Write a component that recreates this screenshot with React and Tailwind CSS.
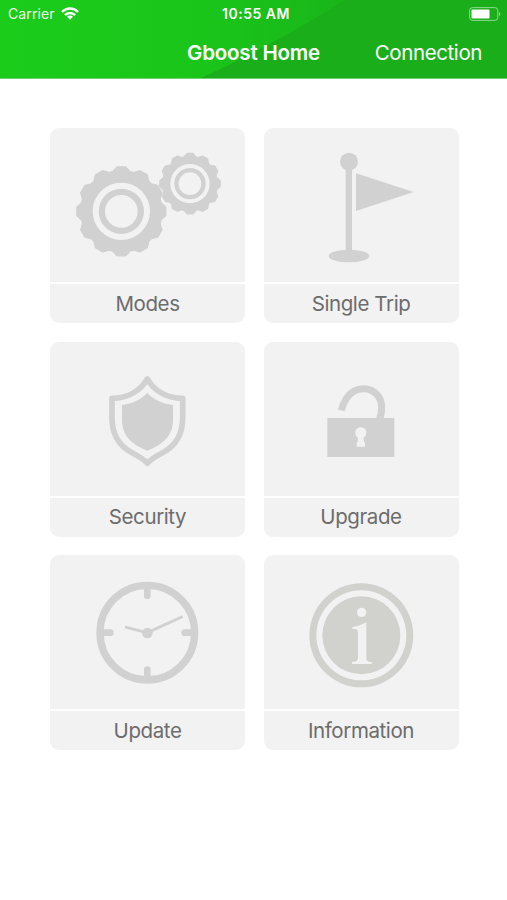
import React from "react";

const GREY = "#d1d1d1";
const CARD = "#f2f2f2";

// Outline of a cog: flat-topped teeth with shallow valleys between them
const gearPoints = (cx, cy, outer, inner, teeth) => {
    const step = (Math.PI * 2) / teeth;
    const points = [];
    for (let i = 0; i < teeth; i++) {
        const mid = i * step - Math.PI / 2;
        [[-0.41, inner], [-0.18, outer], [0.18, outer], [0.41, inner]].forEach(([offset, r]) => {
            const a = mid + offset * step;
            points.push(`${(cx + r * Math.cos(a)).toFixed(1)},${(cy + r * Math.sin(a)).toFixed(1)}`);
        });
    }
    return points.join(" ");
};

const Gear = ({ cx, cy, outer, inner, teeth, rings }) => (
    <g>
        <polygon
            points={gearPoints(cx, cy, outer - 2, inner - 2, teeth)}
            fill={GREY}
            stroke={GREY}
            strokeWidth="4"
            strokeLinejoin="round"
        />
        <circle cx={cx} cy={cy} r={rings[0]} fill={CARD} />
        <circle cx={cx} cy={cy} r={rings[1]} fill={GREY} />
        <circle cx={cx} cy={cy} r={rings[2]} fill={CARD} />
    </g>
);

const GearsIcon = () => (
    <svg viewBox="15 24 585 462" className="w-full h-full">
        <Gear cx={229} cy={274} outer={136} inner={124} teeth={12} rings={[86, 68, 49]} />
        <Gear cx={435} cy={191} outer={93} inner={84} teeth={12} rings={[59, 47, 34]} />
    </svg>
);

const FlagIcon = () => (
    <svg viewBox="18 24 585 462" className="w-full h-full" fill={GREY}>
        <circle cx="273" cy="125" r="27" />
        <rect x="263" y="140" width="19" height="260" />
        <ellipse cx="273" cy="408" rx="61" ry="19" />
        <path d="M294 160 L467 216 L294 273 Z" />
    </svg>
);

const ShieldIcon = () => (
    <svg viewBox="15 18 585 462" className="w-full h-full">
        <path
            d="M307 129 C326 161 361 187 413 187 V246 C413 301 389 331 353 350 C330 362 315 371 307 382 C299 371 284 362 261 350 C225 331 201 301 201 246 V187 C253 187 288 161 307 129 Z"
            fill="none"
            stroke={GREY}
            strokeWidth="17"
            strokeLinejoin="round"
        />
        <path
            d="M307 171 C325 190 350 203 384 207 V251 C384 300 352 326 307 344 C262 326 231 300 231 251 V207 C264 203 289 190 307 171 Z"
            fill={GREY}
        />
    </svg>
);

const UnlockIcon = () => (
    <svg viewBox="18 18 585 462" className="w-full h-full">
        <path
            d="M250 223 C253 211 258 199 265 188 C278 167 297 158 317 158 C352 158 371 187 371 214 C371 230 369 240 364 250"
            fill="none"
            stroke={GREY}
            strokeWidth="21"
        />
        <rect x="208" y="246" width="201" height="117" fill={GREY} />
        <path
            d="M308 274 C318 274 325 281 325 290 C325 297 321 301 316 306 C316 313 319 318 321 322 V332 H296 V322 C298 318 300 313 300 306 C295 301 292 297 292 290 C292 281 299 274 308 274 Z"
            fill={CARD}
        />
    </svg>
);

const ClockIcon = () => (
    <svg viewBox="15 15 585 462" className="w-full h-full" fill="none" stroke={GREY} strokeLinecap="round">
        <circle cx="307" cy="248" r="142" strokeWidth="22" />
        <path d="M307 110 V137 M307 359 V387 M169 248 H196 M419 248 H447" strokeWidth="20" />
        <path d="M244 232 L307 248 L410 201" strokeWidth="9" />
        <circle cx="307" cy="249" r="16" fill={GREY} stroke="none" />
    </svg>
);

const InfoIcon = () => (
    <svg viewBox="18 15 585 462" className="w-full h-full">
        <circle cx="310" cy="256" r="156" fill="#d1d2ce" />
        <circle cx="310" cy="256" r="135" fill={CARD} />
        <circle cx="310" cy="256" r="117" fill="#d1d2ce" />
        <circle cx="311" cy="187" r="14" fill={CARD} />
        <path
            d="M325 217 V323 C325 333 329 335 341 336 V342 H282 V336 C296 335 300 332 300 322 V247 C300 238 295 236 283 237 V232 C299 229 312 224 325 217 Z"
            fill={CARD}
        />
    </svg>
);

const tiles = [
    { label: "Modes", icon: GearsIcon },
    { label: "Single Trip", icon: FlagIcon },
    { label: "Security", icon: ShieldIcon },
    { label: "Upgrade", icon: UnlockIcon },
    { label: "Update", icon: ClockIcon },
    { label: "Information", icon: InfoIcon },
];

const Tile = ({ label, icon: Icon }) => (
    <button className="w-[195px] h-[195px] flex flex-col gap-[2px] rounded-[9px] overflow-hidden">
        <div className="w-full h-[154px] shrink-0 bg-[#f2f2f2]">
            <Icon />
        </div>
        <div className="w-full flex-1 flex items-center justify-center pt-px bg-[#f2f2f2]">
            <span className="text-[20.5px] leading-none tracking-[-0.4px] text-[#6c6c6c]">{label}</span>
        </div>
    </button>
);

const StatusBar = () => (
    <div className="relative h-[27px] flex items-center justify-between pl-2 pr-[6px]">
        <div className="w-24 flex items-center gap-[6px]">
            <span className="text-[14px] leading-none tracking-[0.1px] opacity-90">Carrier</span>
            <svg viewBox="0 0 18 13" className="w-[18px] h-[13px]" fill="none" stroke="white" strokeWidth="2.5">
                <path d="M1 5 C5.5 0.4 12.5 0.4 17 5" />
                <path d="M3.9 8.2 C6.8 5.3 11.2 5.3 14.1 8.2" />
                <path d="M9 12.8 L6 9.8 C7.8 8.2 10.2 8.2 12 9.8 Z" fill="white" stroke="none" />
            </svg>
        </div>
        <span className="text-[14px] leading-none font-semibold tracking-[0.5px] pl-[3px]">10:55 AM</span>
        <div className="w-24 flex justify-end">
            <svg viewBox="0 0 32 14" className="w-8 h-[14px]">
                <rect x="0.6" y="0.6" width="28.2" height="12.8" rx="3" fill="none" stroke="white" strokeOpacity="0.5" />
                <rect x="2.5" y="2.5" width="18" height="9" rx="1" fill="white" />
                <path d="M30 5 C31.7 5.6 31.7 8.4 30 9 Z" fill="white" fillOpacity="0.5" />
            </svg>
        </div>
    </div>
);

const Header = () => (
    <header className="relative h-[79px] text-white bg-[#1aaf1a] border-b border-[#6fd06f]">
        {/* Lighter sweep over the left side of the bar */}
        <svg viewBox="0 0 507 78" className="absolute inset-0 w-[507px] h-[78px]">
            <defs>
                <linearGradient id="sweep" x1="0" y1="0" x2="1" y2="0">
                    <stop offset="0" stopColor="#1bcc1b" />
                    <stop offset="0.6" stopColor="#1ac51a" />
                    <stop offset="1" stopColor="#19b619" />
                </linearGradient>
            </defs>
            <path d="M0 0 H344 Q282 41 201 78 H0 Z" fill="url(#sweep)" />
        </svg>
        <StatusBar />
        <div className="relative h-[51px] pt-[2px] grid grid-cols-[1fr_134px_1fr] items-center">
            <span />
            <h1 className="text-center text-[20.5px] leading-none font-semibold tracking-[-0.2px] whitespace-nowrap">Gboost Home</h1>
            <button className="justify-self-end mr-[25px] text-[20.5px] leading-none tracking-[-0.4px]">Connection</button>
        </div>
    </header>
);

const App = () => (
    <div className="w-[507px] h-[900px] bg-white overflow-hidden font-['Inter',sans-serif]">
        <Header />
        <main className="grid grid-cols-[195px_195px] gap-[18.5px] pl-[50px] pt-[49px]">
            {tiles.map((tile) => (
                <Tile key={tile.label} {...tile} />
            ))}
        </main>
    </div>
);

export default App;
